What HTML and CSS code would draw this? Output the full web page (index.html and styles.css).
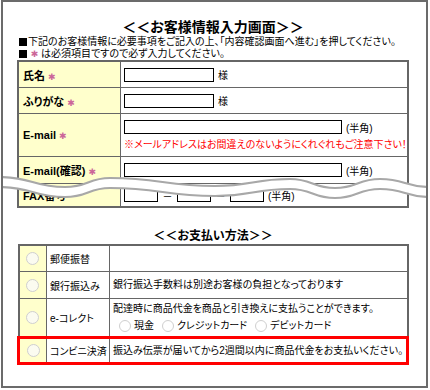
FILE: index.html
```html
<!DOCTYPE html>
<html lang="ja">
<head>
<meta charset="utf-8">
<title>お客様情報入力画面</title>
<link rel="stylesheet" href="styles.css">
</head>
<body>
<div class="frame">
  <h1 class="title">＜＜お客様情報入力画面＞＞</h1>
  <p class="note"><span class="sq"></span>下記のお客様情報に必要事項をご記入の上、「内容確認画面へ進む」を押してください。<br><span class="sq"></span> <span class="req">✱</span> は必須項目ですので必ず入力してください。</p>
  <table class="form">
    <tr class="r1"><th>氏名 <span class="req">✱</span></th><td><span class="box w-name"></span><span class="suffix">様</span></td></tr>
    <tr class="r2"><th>ふりがな <span class="req">✱</span></th><td><span class="box w-name"></span><span class="suffix">様</span></td></tr>
    <tr class="r3"><th>E-mail <span class="req">✱</span></th><td><div><span class="box w-mail"></span><span class="suffix">(半角)</span></div><div class="warn">※メールアドレスはお間違えのないようにくれぐれもご注意下さい！</div></td></tr>
    <tr class="r4"><th>E-mail(確認) <span class="req">✱</span></th><td><span class="box w-mail"></span><span class="suffix">(半角)</span></td></tr>
    <tr class="r5"><th>FAX番号</th><td><span class="box w-fax"></span><span class="dash">－</span><span class="box w-fax"></span><span class="dash">－</span><span class="box w-fax"></span><span class="suffix">(半角)</span></td></tr>
  </table>
  <h2 class="title2">＜＜お支払い方法＞＞</h2>
  <table class="pay">
    <tr class="p1"><td class="sel"><span class="radio"></span></td><td class="name">郵便振替</td><td class="desc"></td></tr>
    <tr class="p2"><td class="sel"><span class="radio"></span></td><td class="name">銀行振込み</td><td class="desc">銀行振込手数料は別途お客様の負担となっております</td></tr>
    <tr class="p3"><td class="sel"><span class="radio"></span></td><td class="name">e-コレクト</td><td class="desc">配達時に商品代金を商品と引き換えに支払うことができます。<div class="opts"><span class="radio sm"></span><span class="opt">現金</span><span class="radio sm"></span><span class="opt">クレジットカード</span><span class="radio sm"></span><span class="opt">デビットカード</span></div></td></tr>
    <tr class="p4"><td class="sel"><span class="radio"></span></td><td class="name">コンビニ決済</td><td class="desc">振込み伝票が届いてから2週間以内に商品代金をお支払いください。</td></tr>
  </table>
  <svg class="wave" width="430" height="32" viewBox="0 0 430 32" aria-hidden="true">
    <path d="M0,5 C32,5 33,15 65,15 C88,15 88,6 110,6 C160,6 165,14 215,14 C252,14 253,7 290,7 C312,7 313,16 335,16 C357,16 358,7 380,7 C405,7 405,15 430,15 L430,25 C405,25 405,17 380,17 C358,17 357,26 335,26 C313,26 312,17 290,17 C253,17 252,24 215,24 C165,24 160,16 110,16 C88,16 88,25 65,25 C33,25 32,15 0,15 Z" fill="#fff"/>
    <path d="M0,5 C32,5 33,15 65,15 C88,15 88,6 110,6 C160,6 165,14 215,14 C252,14 253,7 290,7 C312,7 313,16 335,16 C357,16 358,7 380,7 C405,7 405,15 430,15" fill="none" stroke="#a8a8a8" stroke-width="2.2"/>
    <path d="M0,15 C32,15 33,25 65,25 C88,25 88,16 110,16 C160,16 165,24 215,24 C252,24 253,17 290,17 C312,17 313,26 335,26 C357,26 358,17 380,17 C405,17 405,25 430,25" fill="none" stroke="#a8a8a8" stroke-width="2.2"/>
  </svg>
</div>
</body>
</html>
```
FILE: styles.css
```css
body {
  margin: 0;
  font-family: "Liberation Sans", "Noto Sans CJK JP", sans-serif;
  font-size: 10px;
  color: #000;
  font-feature-settings: "palt" 1;
  background: #fff;
}

.frame {
  position: relative;
  box-sizing: border-box;
  width: 427px;
  height: 388px;
  margin-left: 1px;
  border: 2px solid #6b6b6b;
  padding: 17px 0 0 14px;
  overflow: hidden;
}

.title {
  margin: 0;
  width: 392px;
  font-size: 14px;
  line-height: 17px;
  font-weight: bold;
  text-align: center;
}

.note {
  margin: 0 0 0 2px;
  font-size: 10px;
  line-height: 12px;
  white-space: nowrap;
}

.sq {
  display: inline-block;
  width: 8px;
  height: 8px;
  margin-right: 1px;
  background: #000;
  vertical-align: -1px;
}

.req {
  color: #cc6699;
  font-family: "DejaVu Sans", sans-serif;
  font-size: 9px;
}

.form {
  width: 392px;
  border-collapse: collapse;
  border: 2px solid #666;
}

.form th,
.form td {
  border: 1px solid #666;
  padding: 0;
  vertical-align: middle;
}

.form th {
  width: 97px;
  padding-left: 4px;
  background: #ffffcc;
  text-align: left;
  font-size: 11px;
  font-weight: bold;
  white-space: nowrap;
}

.form td {
  padding-left: 3px;
  white-space: nowrap;
}

.form .r1 th, .form .r1 td { height: 25px; }
.form .r2 th, .form .r2 td { height: 25px; }
.form .r3 th, .form .r3 td { height: 42px; }
.form .r4 th, .form .r4 td { height: 26px; }
.form .r5 th, .form .r5 td { height: 22px; }

.box {
  display: inline-block;
  box-sizing: border-box;
  height: 14px;
  border: 1px solid #000;
  background: #fff;
  vertical-align: middle;
}

.w-name { width: 90px; }
.w-mail { width: 218px; }
.w-fax { width: 34px; }

.suffix {
  display: inline-block;
  margin-left: 4px;
  vertical-align: middle;
  font-size: 10px;
}

.dash {
  display: inline-block;
  width: 19px;
  text-align: center;
  vertical-align: middle;
}

.warn {
  margin-top: 4px;
  color: #ff0000;
  font-size: 10px;
  line-height: 12px;
}

.title2 {
  margin: 20px 0 0 0;
  width: 392px;
  font-size: 12px;
  line-height: 16px;
  font-weight: bold;
  text-align: center;
}

.pay {
  width: 392px;
  border-collapse: collapse;
  border: 2px solid #666;
}

.pay td {
  border: 1px solid #666;
  padding: 0;
  font-size: 10px;
  vertical-align: middle;
  white-space: nowrap;
}

.pay .sel {
  width: 26px;
  background: #ffffcc;
  text-align: center;
}

.pay .name {
  width: 59px;
  padding-left: 3px;
}

.pay .desc {
  padding-left: 3px;
  line-height: 16px;
}

.pay .p1 td { height: 25px; }
.pay .p2 td { height: 26px; }
.pay .p3 td { height: 37px; }
.pay .p4 td {
  height: 23px;
  border-top: 3px solid #ff0000;
  border-bottom: 3px solid #ff0000;
}
.pay .p4 td:first-child { border-left: 3px solid #ff0000; }
.pay .p4 td:last-child { border-right: 3px solid #ff0000; }

.radio {
  display: inline-block;
  box-sizing: border-box;
  width: 13px;
  height: 13px;
  border: 1px solid #cfcfcf;
  border-radius: 50%;
  background: #fbfbf0;
  vertical-align: middle;
}

.radio.sm {
  width: 12px;
  height: 12px;
  margin: 0 3px 0 6px;
  background: #fff;
}

.opt {
  vertical-align: middle;
  margin-right: 2px;
}

.wave {
  position: absolute;
  left: -3px;
  top: 170px;
  display: block;
}
```
